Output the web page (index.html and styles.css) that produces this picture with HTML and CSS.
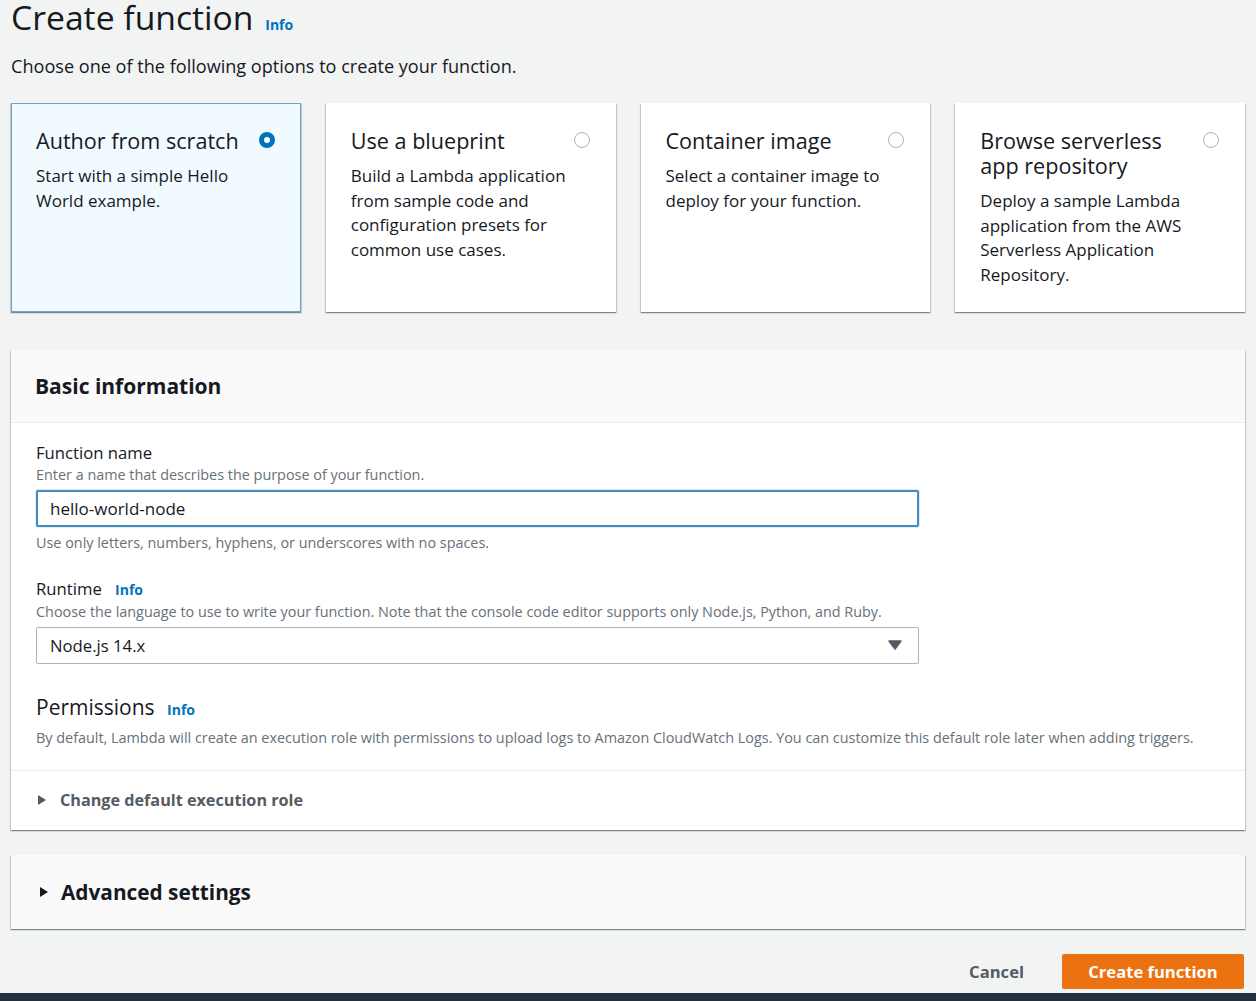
FILE: index.html
```html
<!DOCTYPE html>
<html lang="en">
  <head>
    <meta charset="UTF-8" />
    <title>Create function</title>
    <link rel="stylesheet" href="styles.css">
  </head>
  <body>
    <div class="page">
      <h1 class="title">Create function <a class="info" href="#">Info</a></h1>
      <p class="lead">Choose one of the following options to create your function.</p>

      <div class="options">
        <label class="option selected">
          <div class="option-head">
            <span class="option-title">Author from scratch</span>
            <span class="radio checked"></span>
          </div>
          <p class="option-desc">Start with a simple Hello World example.</p>
        </label>
        <label class="option">
          <div class="option-head">
            <span class="option-title">Use a blueprint</span>
            <span class="radio"></span>
          </div>
          <p class="option-desc">Build a Lambda application from sample code and configuration presets for common use cases.</p>
        </label>
        <label class="option">
          <div class="option-head">
            <span class="option-title">Container image</span>
            <span class="radio"></span>
          </div>
          <p class="option-desc">Select a container image to deploy for your function.</p>
        </label>
        <label class="option">
          <div class="option-head">
            <span class="option-title">Browse serverless app repository</span>
            <span class="radio"></span>
          </div>
          <p class="option-desc">Deploy a sample Lambda application from the AWS Serverless Application Repository.</p>
        </label>
      </div>

      <section class="panel">
        <div class="panel-header">
          <h2>Basic information</h2>
        </div>
        <div class="panel-body">
          <div class="field">
            <div class="field-label">Function name</div>
            <div class="field-desc">Enter a name that describes the purpose of your function.</div>
            <input class="text-input focused" type="text" value="hello-world-node" />
            <div class="field-hint">Use only letters, numbers, hyphens, or underscores with no spaces.</div>
          </div>

          <div class="field">
            <div class="field-label">Runtime <a class="info" href="#">Info</a></div>
            <div class="field-desc">Choose the language to use to write your function. Note that the console code editor supports only Node.js, Python, and Ruby.</div>
            <div class="select">
              <span>Node.js 14.x</span>
              <svg class="caret" width="14" height="10" viewBox="0 0 14 10"><path d="M1 1h12L7 9z" fill="#545b64" stroke="#545b64" stroke-width="1.5" stroke-linejoin="round"/></svg>
            </div>
          </div>

          <div class="field perms">
            <div class="perms-label">Permissions <a class="info" href="#">Info</a></div>
            <div class="field-desc">By default, Lambda will create an execution role with permissions to upload logs to Amazon CloudWatch Logs. You can customize this default role later when adding triggers.</div>
          </div>
        </div>
        <div class="expander">
          <svg class="tri" width="10" height="12" viewBox="0 0 10 12"><path d="M1 1l8 5-8 5z" fill="#545b64"/></svg>
          <span>Change default execution role</span>
        </div>
      </section>

      <section class="panel collapsed">
        <div class="panel-header">
          <svg class="tri" width="10" height="12" viewBox="0 0 10 12"><path d="M1 1l8 5-8 5z" fill="#16191f"/></svg>
          <h2>Advanced settings</h2>
        </div>
      </section>

      <div class="actions">
        <button class="btn-link">Cancel</button>
        <button class="btn-primary">Create function</button>
      </div>
    </div>
    <div class="bottombar"></div>
  </body>
</html>
```

FILE: styles.css
```css
body {
  margin: 0;
  font-family: "Open Sans", "Noto Sans", Arial, sans-serif;
  background-color: #f2f3f3;
  color: #16191f;
}
.page {
  padding: 0 11px;
}
.title {
  margin: 0;
  font-size: 33.7px;
  font-weight: 400;
  line-height: 34px;
}
.info {
  color: #0073bb;
  font-size: 14px;
  font-weight: 700;
  text-decoration: none;
  margin-left: 6px;
}
.title .info {
  margin-left: 3px;
}
.lead {
  margin: 10px 0 0;
  font-size: 18.1px;
  line-height: 28px;
}
.options {
  display: grid;
  grid-template-columns: repeat(4, 1fr);
  gap: 25px;
  margin-top: 23px;
}
.option {
  background: #fff;
  padding: 24px 24px 23px 24px;
  box-shadow: 0 1px 1px 0 rgba(0, 28, 36, 0.3), 1px 1px 1px 0 rgba(0, 28, 36, 0.15), -1px 1px 1px 0 rgba(0, 28, 36, 0.15);
  border: 1px solid transparent;
}
.option.selected {
  background: #f1faff;
  border-color: #74a3c4;
}
.option-head {
  display: flex;
  justify-content: space-between;
  align-items: flex-start;
}
.option-title {
  font-size: 21.6px;
  line-height: 25px;
  max-width: 210px;
}
.radio {
  flex: none;
  width: 16px;
  height: 16px;
  border-radius: 50%;
  border: 1px solid #aab7b8;
  box-sizing: border-box;
  margin-top: 4px;
  margin-right: 1px;
  background: #fff;
}
.radio.checked {
  border: 5px solid #0073bb;
}
.option-desc {
  margin: 11px 0 0;
  font-size: 17px;
  line-height: 24.7px;
  max-width: 232px;
}
.panel {
  background: #fff;
  margin-top: 38px;
  box-shadow: 0 1px 1px 0 rgba(0, 28, 36, 0.3), 1px 1px 1px 0 rgba(0, 28, 36, 0.15), -1px 1px 1px 0 rgba(0, 28, 36, 0.15);
}
.panel-header {
  background: #fafafa;
  border-bottom: 1px solid #eaeded;
  padding: 0 24px;
  height: 72px;
  display: flex;
  align-items: center;
}
.panel-header h2 {
  margin: 0;
  font-size: 21px;
  font-weight: 700;
}
.panel-body {
  padding: 19px 25px 21px;
}
.field + .field {
  margin-top: 24px;
}
.field-label {
  font-size: 16.7px;
  line-height: 22px;
}
.field-label .info {
  margin-left: 9px;
}
.field-desc,
.field-hint {
  font-size: 14.4px;
  line-height: 22px;
  color: #687078;
}
.field-hint {
  margin-top: 5px;
}
.text-input {
  display: block;
  box-sizing: border-box;
  width: 883px;
  height: 37px;
  margin-top: 4px;
  padding: 0 12px;
  font-family: inherit;
  font-size: 17px;
  color: #16191f;
  border: 1px solid #aab7b8;
  border-radius: 2px;
  outline: none;
}
.text-input.focused {
  border: 2px solid #4a8ab8;
  box-shadow: 0 0 0 1px #d6f0ff;
}
.select {
  box-sizing: border-box;
  width: 883px;
  height: 37px;
  margin-top: 4px;
  padding: 0 16px 0 13px;
  border: 1px solid #aab7b8;
  border-radius: 2px;
  display: flex;
  align-items: center;
  justify-content: space-between;
  font-size: 16.7px;
}
.field.perms {
  margin-top: 30px;
}
.perms-label {
  font-size: 21px;
  line-height: 26px;
}
.perms-label .info {
  margin-left: 7px;
}
.field.perms .field-desc {
  margin-top: 4px;
}
.expander {
  border-top: 1px solid #eaeded;
  height: 59px;
  padding: 0 25px;
  display: flex;
  align-items: center;
  gap: 13px;
  font-size: 16.2px;
  font-weight: 700;
  color: #545b64;
}
.tri {
  margin-left: 1px;
}
.panel.collapsed {
  margin-top: 25px;
}
.panel.collapsed .panel-header {
  height: 74px;
  border-bottom: 0;
  gap: 12px;
  padding-left: 27px;
}
.panel.collapsed h2 {
  font-size: 20.8px;
}
.actions {
  display: flex;
  justify-content: flex-end;
  align-items: center;
  gap: 20px;
  margin-top: 25px;
  padding-right: 1px;
}
.actions button {
  font-family: inherit;
  font-size: 16.6px;
  font-weight: 700;
  border: 0;
  cursor: pointer;
}
.btn-link {
  background: none;
  color: #545b64;
  padding: 0 18px;
  height: 35px;
}
.btn-primary {
  background: #ec7211;
  color: #fff;
  width: 182px;
  height: 35px;
  border-radius: 2px;
}
.bottombar {
  margin-top: 4px;
  height: 8px;
  background: #232f3e;
}
```
